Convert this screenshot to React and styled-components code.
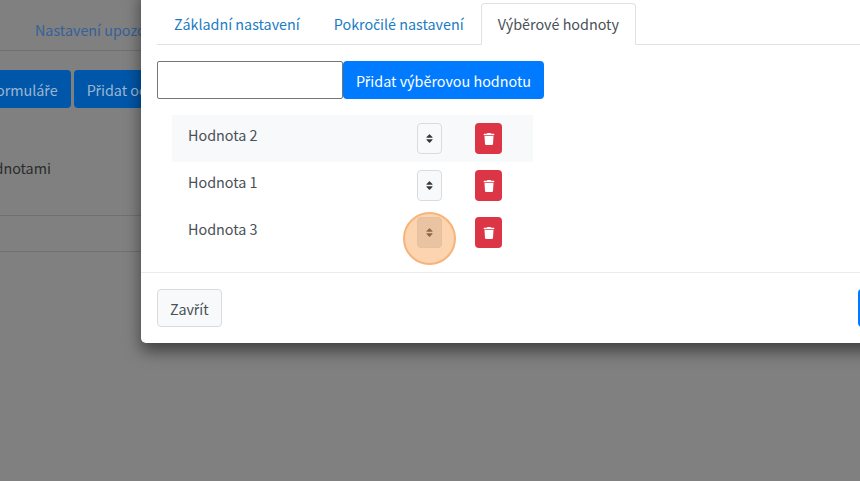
import React from 'react';
import styled, { createGlobalStyle } from 'styled-components';
import { FaSort, FaTrash } from 'react-icons/fa';

const GlobalStyle = createGlobalStyle`
  html, body { margin: 0; height: 100%; }
  body {
    font-family: "Noto Sans CJK SC", "Noto Sans", sans-serif;
    font-size: 14.35px;
    color: #212529;
  }
  * { box-sizing: border-box; }
`;

const Screen = styled.div`
  position: relative;
  width: 860px;
  height: 481px;
  overflow: hidden;
  background: #808080;
`;

const Page = styled.div`
  color: #2b2b2b;
`;

const PageTabs = styled.div`
  height: 51px;
  padding: 18px 0 0 35px;
  border-bottom: 1px solid #707070;
  color: #35609a;
  line-height: 24px;
  white-space: nowrap;
`;

const PageActions = styled.div`
  display: flex;
  gap: 3px;
  margin: 19px 0 0 -74px;
  height: 38px;
`;

const PageAction = styled.div`
  display: flex;
  align-items: center;
  padding: 0 13px;
  background: #0056a8;
  border-radius: 4px;
  color: #9cb6d2;
  white-space: nowrap;
`;

const PageLabel = styled.div`
  height: 108px;
  padding: 48px 0 0;
  border-bottom: 1px solid #707070;
  line-height: 24px;
  margin-left: -74px;
  white-space: nowrap;
`;

const PageRow = styled.div`
  height: 36px;
  border-bottom: 1px solid #707070;
`;

const Modal = styled.div`
  position: absolute;
  left: 141px;
  top: -13px;
  width: 800px;
  height: 356px;
  background: #fff;
  border-radius: 5px;
  box-shadow: 0 8px 16px rgba(0, 0, 0, 0.5);
  display: flex;
  flex-direction: column;
`;

const ModalBody = styled.div`
  flex: 1;
  padding: 16px 16px 0;
`;

const TabBar = styled.div`
  display: flex;
  height: 42px;
  border-bottom: 1px solid #dee2e6;
`;

const Tab = styled.div`
  height: ${p => (p.$active ? '42px' : '41px')};
  padding: 8px 16px;
  line-height: 24px;
  border: 1px solid ${p => (p.$active ? '#dee2e6' : 'transparent')};
  border-bottom-color: ${p => (p.$active ? '#fff' : 'transparent')};
  border-radius: 4px 4px 0 0;
  background: ${p => (p.$active ? '#fff' : 'transparent')};
  color: ${p => (p.$active ? '#495057' : '#1b7bc4')};
  white-space: nowrap;
`;

const AddRow = styled.div`
  display: flex;
  margin-top: 16px;
  height: 38px;
`;

const ValueInput = styled.input`
  width: 186px;
  height: 38px;
  border: 1px solid #767676;
  border-radius: 2px;
  background: #fff;
`;

const AddButton = styled.button`
  font: inherit;
  height: 38px;
  padding: 0 13px;
  border: 0;
  border-radius: 4px;
  background: #007bff;
  color: #fff;
`;

const ValueList = styled.div`
  width: 361px;
  margin: 16px 0 0 15px;
`;

const ValueRow = styled.div`
  display: grid;
  grid-template-columns: 229px 58px 27px;
  height: 47px;
  padding: 8px 0 0 16px;
  background: ${p => (p.$shaded ? '#f8f9fa' : '#fff')};
  line-height: 24px;
  color: #495057;
`;

const SortButton = styled.div`
  position: relative;
  width: 25px;
  height: 31px;
  display: flex;
  align-items: center;
  justify-content: center;
  background: ${p => (p.$hover ? '#dae0e5' : '#f8f9fa')};
  border: 1px solid ${p => (p.$hover ? '#d3d9df' : '#d8dce0')};
  border-radius: 4px;
  color: #343a40;
  font-size: 11px;
`;

const TrashButton = styled.div`
  width: 27px;
  height: 31px;
  display: flex;
  align-items: center;
  justify-content: center;
  background: #dc3545;
  border-radius: 4px;
  color: #fff;
  font-size: 12px;
`;

const ClickMark = styled.div`
  position: absolute;
  left: -15px;
  top: -6px;
  width: 53px;
  height: 53px;
  border-radius: 50%;
  background: rgba(250, 160, 80, 0.45);
  border: 2px solid #f6b47a;
`;

const ModalFooter = styled.div`
  display: flex;
  height: 71px;
  padding: 16px;
  border-top: 1px solid #e9ecef;
`;

const CloseButton = styled.div`
  flex: none;
  display: flex;
  align-items: center;
  width: 65px;
  height: 38px;
  padding: 0 12px;
  background: #f8f9fa;
  border: 1px solid #d8dce0;
  border-radius: 4px;
  color: #495057;
`;

const SaveButton = styled.div`
  flex: none;
  width: 100px;
  height: 38px;
  margin-left: 636px;
  background: #007bff;
  border-radius: 4px;
`;

// the CJK face sets ř and č with a broken advance, so these two come from Lato
const Accent = styled.span`
  font-family: Lato, sans-serif;
`;

const Cs = ({ children }) =>
  children.split(/([řč])/).map((part, index) =>
    index % 2 ? <Accent key={index}>{part}</Accent> : part
  );

const values = ['Hodnota 2', 'Hodnota 1', 'Hodnota 3'];

export default function App() {
  return (
    <Screen>
      <GlobalStyle />
      <Page>
        <PageTabs>Nastavení upozornění</PageTabs>
        <PageActions>
          <PageAction><span><Cs>Upravit formuláře</Cs></span></PageAction>
          <PageAction><span><Cs>Přidat odkaz</Cs></span></PageAction>
        </PageActions>
        <PageLabel>Výběr s hodnotami</PageLabel>
        <PageRow />
      </Page>
      <Modal>
        <ModalBody>
          <TabBar>
            <Tab>Základní nastavení</Tab>
            <Tab><Cs>Pokročilé nastavení</Cs></Tab>
            <Tab $active>Výběrové hodnoty</Tab>
          </TabBar>
          <AddRow>
            <ValueInput />
            <AddButton><Cs>Přidat výběrovou hodnotu</Cs></AddButton>
          </AddRow>
          <ValueList>
            {values.map((value, index) => (
              <ValueRow key={value} $shaded={index === 0}>
                <div>{value}</div>
                <SortButton $hover={index === 2}>
                  <FaSort />
                  {index === 2 && <ClickMark />}
                </SortButton>
                <TrashButton>
                  <FaTrash />
                </TrashButton>
              </ValueRow>
            ))}
          </ValueList>
        </ModalBody>
        <ModalFooter>
          <CloseButton><span><Cs>Zavřít</Cs></span></CloseButton>
          <SaveButton />
        </ModalFooter>
      </Modal>
    </Screen>
  );
}
